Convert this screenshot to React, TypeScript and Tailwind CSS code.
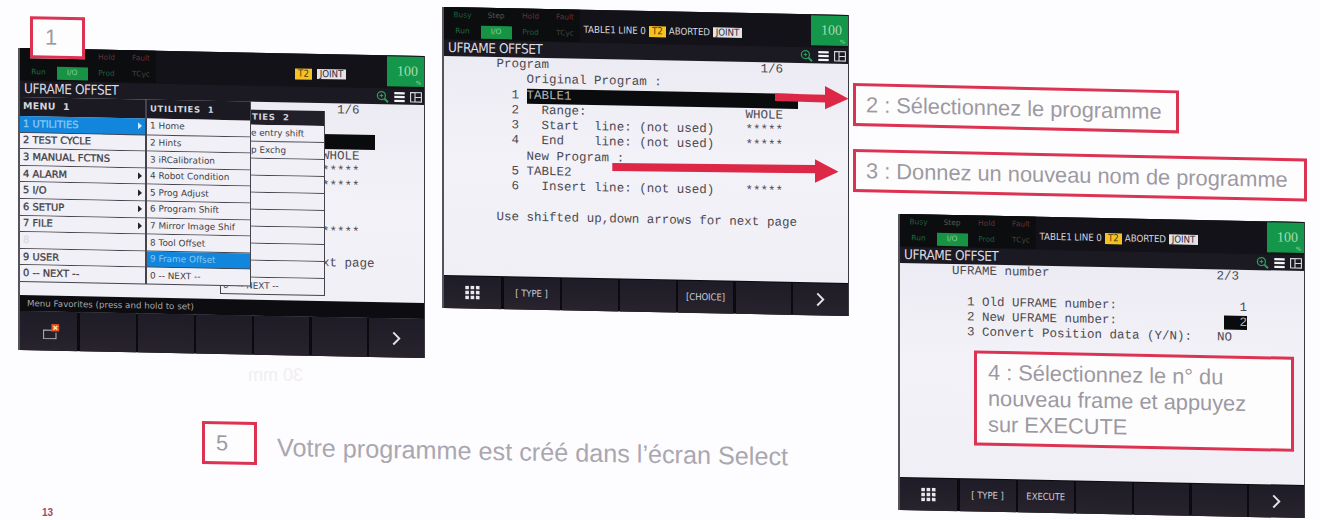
import type { ReactNode } from "react";

const UI = "font-['DejaVu_Sans_Condensed','DejaVu_Sans',sans-serif]";
const WIDE = "font-['DejaVu_Sans',sans-serif]";
const MONO = "font-['Liberation_Mono',monospace]";

function ZoomIcon() {
  return (
    <svg className="h-[13px] w-[13px] text-[#2b9c5c]" viewBox="0 0 13 13" fill="none" stroke="currentColor">
      <circle cx="5.4" cy="5.4" r="4" strokeWidth="1.3" />
      <path d="M8.5 8.5 L12 12" strokeWidth="2" />
      <path d="M5.4 3.6 V7.2 M3.6 5.4 H7.2" strokeWidth="1.1" />
    </svg>
  );
}

function BarsIcon() {
  return (
    <svg className="h-[11px] w-[11px]" viewBox="0 0 11 11" fill="#f4f3f6">
      <rect x="0.3" y="0.5" width="10.4" height="2.3" />
      <rect x="0.3" y="4.4" width="10.4" height="2.3" />
      <rect x="0.3" y="8.3" width="10.4" height="2.3" />
    </svg>
  );
}

function PanesIcon() {
  return (
    <svg className="h-[11px] w-[12px]" viewBox="0 0 12 11" fill="none" stroke="#dcdbe0" strokeWidth="1.1">
      <path d="M0.6 0.8 H11.4 V10.2 H0.6 Z M5 0.8 V10.2 M5 5.5 H11.4" />
    </svg>
  );
}

function KeypadIcon() {
  return (
    <svg className="h-[14px] w-[15px]" viewBox="0 0 15 14" fill="#e9e8ec">
      {[0, 5.3, 10.6].map((x) =>
        [0, 5, 10].map((y) => <rect key={`${x}-${y}`} x={x + 0.3} y={y + 0.2} width="3.6" height="3.5" />),
      )}
    </svg>
  );
}

function NextIcon() {
  return (
    <svg className="h-[14px] w-[9px]" viewBox="0 0 9 15" fill="none" stroke="#e4e3e8" strokeWidth="2">
      <path d="M1 1 L7.5 7.5 L1 14" />
    </svg>
  );
}

function FavoriteIcon() {
  return (
    <svg className="ml-[5px] h-[16px] w-[17px]" viewBox="0 0 17 16" fill="none">
      <path d="M9 6.5 H0.6 V15 H13 V9" stroke="#b8b6bd" strokeWidth="1" />
      <rect x="8.4" y="0.4" width="7.8" height="7.4" fill="#e2531f" />
      <path d="M10.4 2.2 L14.2 6 M14.2 2.2 L10.4 6" stroke="#fbe3a0" strokeWidth="1.5" />
    </svg>
  );
}

function Header({ program }: { program?: boolean }) {
  return (
    <div className={`flex h-[49px] flex-col bg-[#1b1922] ${UI}`}>
      <div className="flex h-[33px] bg-[#131218]">
        <div
          className={`grid h-[32px] w-[136px] grid-cols-[33px_34px_35px_34px] grid-rows-[15px_17px] items-center justify-items-center bg-[#0c0d0e] pl-[2px] text-[7.5px] leading-none ${WIDE}`}
        >
          <span className="text-[#1d5c40]">{program ? "Busy" : ""}</span>
          <span className="text-[#5b5648]">{program ? "Step" : ""}</span>
          <span className="text-[#64303a]">Hold</span>
          <span className="text-[#64303a]">Fault</span>
          <span className="pt-px text-[#1d6d45]">Run</span>
          <span className="mt-px flex h-[13px] w-[31px] items-center justify-center bg-[#169345] text-[#8fcf9f]">I/O</span>
          <span className="text-[#1d5c40]">Prod</span>
          <span className="text-[#45443f]">TCyc</span>
        </div>
        <div
          className={`flex flex-1 items-center justify-end pt-[7px] text-[9.7px] leading-none tracking-[-0.05px] text-[#d9d8de] ${program ? "gap-[3px] pr-[69px]" : "gap-[5px] pr-[41px]"}`}
        >
          {program && <span className="whitespace-nowrap">TABLE1 LINE 0</span>}
          <span className="flex h-[11px] w-[17px] items-center justify-center bg-[#f5c222] text-[#4c3d10]">T2</span>
          {program && <span>ABORTED</span>}
          <span className="flex h-[10px] w-[29px] items-center justify-center bg-[#e3e2e6] text-[#2d2b33]">JOINT</span>
        </div>
        <div className="relative mt-[1px] flex h-[30px] w-[37px] items-center justify-center bg-[#14974a] pl-1 font-['Liberation_Serif',serif] text-[14px] leading-none text-[#a9dcb4]">
          100
          <span className="absolute bottom-[1px] right-[3px] text-[6px] leading-none">%</span>
        </div>
      </div>
      <div className="flex h-[16px] items-center justify-between pl-[4px] pr-[2px]">
        <span className="whitespace-nowrap text-[13.5px] leading-none tracking-[-0.45px] text-[#dddce2]">UFRAME OFFSET</span>
        <div className="flex items-center gap-[5px]">
          <ZoomIcon />
          <BarsIcon />
          <PanesIcon />
        </div>
      </div>
    </div>
  );
}

function Row({ n, text, value, selected }: { n?: string; text?: string; value?: ReactNode; selected?: boolean }) {
  return (
    <div className="flex h-[15.25px] items-center whitespace-pre leading-[15.25px]">
      {n !== undefined && <span className="w-[30px] pl-[15px]">{n}</span>}
      <div
        className={
          selected
            ? "flex h-[15.25px] flex-1 justify-between bg-[#0a0b0c] text-[#b5b4b8]"
            : "flex flex-1 justify-between"
        }
      >
        <span>{text}</span>
        {value}
      </div>
    </div>
  );
}

const val = (s: string, pad = "pr-[15px]") => <span className={pad}>{s}</span>;

function ProgramPage() {
  return (
    <div className={`ml-[52.5px] w-[301.5px] text-[12.52px] text-[#4b4a50] ${MONO}`}>
      <Row text="Program" value={val("1/6")} />
      <Row n="" text="Original Program :" />
      <Row n="1" text="TABLE1" selected />
      <Row n="2" text="  Range:" value={val("WHOLE")} />
      <Row n="3" text="  Start  line: (not used)" value={val("*****")} />
      <Row n="4" text="  End    line: (not used)" value={val("*****")} />
      <Row n="" text="New Program :" />
      <Row n="5" text="TABLE2" />
      <Row n="6" text="  Insert line: (not used)" value={val("*****")} />
      <Row />
      <Row text="Use shifted up,down arrows for next page" />
    </div>
  );
}

/* Right-hand part of the program page that stays visible beside the open menus. */
function CoveredProgramPage() {
  return (
    <div className={`ml-[53px] w-[301.5px] text-[12.52px] text-[#4b4a50] ${MONO}`}>
      <Row value={val("1/6")} />
      <Row />
      <Row n="" selected />
      <Row value={val("WHOLE")} />
      <Row value={val("*****")} />
      <Row value={val("*****")} />
      <Row />
      <Row />
      <Row value={val("*****")} />
      <Row />
      <Row value={<span>xt page</span>} />
    </div>
  );
}

function FramePage() {
  return (
    <div className={`ml-[52px] w-[302px] text-[12.5px] text-[#4b4a50] ${MONO}`}>
      <Row text="UFRAME number" value={val("2/3")} />
      <Row />
      <Row n="1" text="Old UFRAME number:" value={val("1", "pr-[7px]")} />
      <Row
        n="2"
        text="New UFRAME number:"
        value={<span className="mr-[7px] h-[14px] bg-[#0a0b0c] pl-[15px] leading-[14px] text-[#b5b4b8]">2</span>}
      />
      <Row n="3" text="Convert Position data (Y/N):" value={val("NO", "pr-[22px]")} />
    </div>
  );
}

function Keys({ items, tall }: { items: ReactNode[]; tall?: boolean }) {
  return (
    <div
      className={`grid grid-cols-[57px_56px_55.5px_55.5px_55px_55px_1fr] gap-x-[2.5px] bg-[#0b0a0e] text-[9.5px] leading-none tracking-[-0.1px] text-[#cfced4] ${UI} ${tall ? "h-[39px]" : "h-[33px] pt-px"}`}
    >
      {items.map((item, i) => (
        <div key={i} className="flex items-center justify-center whitespace-nowrap bg-gradient-to-b from-[#1e1c27] to-[#28232d]">
          {item}
        </div>
      ))}
    </div>
  );
}

function Screen({ className, children }: { className: string; children: ReactNode }) {
  return (
    <section
      className={`relative flex w-[407px] shrink-0 origin-top-left skew-y-[1.13deg] flex-col border-l-2 border-r border-l-[#55535c] border-r-[#3b3941] bg-gradient-to-b from-[#e9e8f1] via-[#f3f2f8] to-[#efeef5] ${className}`}
    >
      {children}
    </section>
  );
}

interface Entry {
  label: string;
  sub?: boolean;
  active?: boolean;
  faded?: boolean;
}

const mainMenu: Entry[] = [
  { label: "1 UTILITIES", sub: true, active: true },
  { label: "2 TEST CYCLE" },
  { label: "3 MANUAL FCTNS" },
  { label: "4 ALARM", sub: true },
  { label: "5 I/O", sub: true },
  { label: "6 SETUP", sub: true },
  { label: "7 FILE", sub: true },
  { label: "8", faded: true },
  { label: "9 USER" },
  { label: "0 -- NEXT --" },
];

const utilities: Entry[] = [
  { label: "1 Home" },
  { label: "2 Hints" },
  { label: "3 iRCalibration" },
  { label: "4 Robot Condition" },
  { label: "5 Prog Adjust" },
  { label: "6 Program Shift" },
  { label: "7 Mirror Image Shif" },
  { label: "8 Tool Offset" },
  { label: "9 Frame Offset", active: true },
  { label: "0 -- NEXT --" },
];

const utilities2 = ["e entry shift", "p Exchg", "", "", "", "", "", "", "", ""];

function entryColors(entry: Entry) {
  if (entry.active) return "bg-[#1286dc] text-[#8cc8f2]";
  if (entry.faded) return "bg-[#f1f0f6] text-[#dcdbe4]";
  return "bg-[#f1f0f6] text-[#3f3d45]";
}

function MenuRow({ entry, className }: { entry: Entry; className: string }) {
  return (
    <div
      className={`flex items-center justify-between whitespace-pre border-b border-[#45434b] pr-[3px] leading-none ${className} ${entryColors(entry)}`}
    >
      <span>{entry.label}</span>
      {entry.sub && (
        <svg className="h-[7px] w-[4px]" viewBox="0 0 4 7" fill={entry.active ? "#d5ebfa" : "#26242b"}>
          <path d="M0 0 L4 3.5 L0 7 Z" />
        </svg>
      )}
    </div>
  );
}

function Menus() {
  return (
    <>
      <div className={`absolute left-[200px] top-[57px] w-[105px] border-x border-[#45434b] ${WIDE}`}>
        <div className="flex h-[15px] items-center whitespace-pre bg-[#211f29] pl-[31px] text-[8.5px] font-bold leading-none tracking-[0.7px] text-[#d6d5da]">
          TIES  2
        </div>
        {utilities2.map((label, i) => (
          <MenuRow
            key={i}
            entry={{ label: i === 9 ? "0   -- NEXT --" : label }}
            className={i === 9 ? "h-[17px] pl-[2px] text-[8.8px]" : "h-[17px] pl-[30px] text-[8.8px]"}
          />
        ))}
      </div>
      <div className={`absolute left-0 top-[49px] flex ${WIDE}`}>
        <div className="w-[127px] border-r-2 border-[#45434b]">
          <div className="flex h-[19px] items-center whitespace-pre bg-[#1b1922] pb-[2px] pl-[3px] text-[9.5px] font-bold leading-none tracking-[0.3px] text-[#d6d5da]">
            MENU  1
          </div>
          {mainMenu.map((e, i) => (
            <MenuRow key={i} entry={e} className="h-[16.6px] pl-[3px] text-[9.9px] [-webkit-text-stroke:0.3px_currentColor]" />
          ))}
        </div>
        <div className="w-[104px] border-r border-[#45434b]">
          <div className="flex h-[19px] items-center whitespace-pre bg-[#1b1922] pl-[3px] text-[8.5px] font-bold leading-none tracking-[0.6px] text-[#d6d5da]">
            UTILITIES  1
          </div>
          {utilities.map((e, i) => (
            <MenuRow key={i} entry={e} className="h-[16.6px] pl-[3px] text-[8.9px]" />
          ))}
        </div>
      </div>
    </>
  );
}

function Callout({ className, children }: { className: string; children: ReactNode }) {
  return (
    <div
      className={`flex shrink-0 origin-top-left items-center whitespace-nowrap border-[3.5px] border-[#dd3352] bg-[#fefdfe] font-['Liberation_Sans',sans-serif] text-[21.8px] leading-[26px] text-[#9c99a2] ${className}`}
    >
      {children}
    </div>
  );
}

export default function App() {
  return (
    <main className="relative flex h-[520px] w-[1320px] overflow-hidden bg-[#fdfcfe]">
      <div className="flex w-[853px] shrink-0 flex-col">
        <div className="flex h-[421px] items-start">
          <Screen className="ml-[18px] mt-[48px] h-[302px]">
            <Header />
            <div className="h-[198px]">
              <CoveredProgramPage />
            </div>
            <Menus />
            <div className={`flex h-[16px] items-center bg-[#0d0c10] pl-[7px] text-[8.7px] leading-none text-[#a5a4aa] ${WIDE}`}>
              Menu Favorites (press and hold to set)
            </div>
            <Keys tall items={[<FavoriteIcon />, "", "", "", "", "", <NextIcon />]} />
            <Callout className="absolute left-[10px] top-[-32px] h-[42px] w-[55px] pl-[12px]">1</Callout>
          </Screen>
          <Screen className="ml-[17px] mt-[6.5px] h-[301px]">
            <Header program />
            <div className="h-[219px]">
              <ProgramPage />
            </div>
            <Keys items={[<KeypadIcon />, "[ TYPE ]", "", "", "[CHOICE]", "", <NextIcon />]} />
          </Screen>
        </div>
        <div className="flex h-[80px] items-start">
          <Callout className="ml-[202px] h-[43px] w-[55px] skew-y-[1.1deg] pl-[11px]">5</Callout>
          <p className="ml-[20px] mt-[12px] origin-top-left skew-y-[1.05deg] whitespace-nowrap font-['Liberation_Sans',sans-serif] text-[25.2px] leading-[28px] text-[#aaa7b0]">
            Votre programme est créé dans l’écran Select
          </p>
        </div>
        <span className="ml-[42px] mt-[6px] font-['Liberation_Sans',sans-serif] text-[10px] font-bold leading-[12px] text-[#a04a68]">
          13
        </span>
      </div>

      <div className="flex w-[467px] shrink-0 flex-col pt-[83px]">
        <Callout className="h-[43px] w-[326px] skew-y-[1.3deg] pl-[10px]">2 : Sélectionnez le programme</Callout>
        <Callout className="mt-[23px] h-[43px] w-[454px] skew-y-[1.2deg] pl-[10px]">
          3 : Donnez un nouveau nom de programme
        </Callout>
        <Screen className="ml-[45px] mt-[22px] h-[296px]">
          <Header program />
          <div className="h-[214px]">
            <FramePage />
          </div>
          <Keys items={[<KeypadIcon />, "[ TYPE ]", "EXECUTE", "", "", "", <NextIcon />]} />
          <Callout className="absolute left-[74px] top-[135px] h-[95px] w-[320px] pl-[11px]">
            <span>
              4 : Sélectionnez le n° du
              <br />
              nouveau frame et appuyez
              <br />
              sur EXECUTE
            </span>
          </Callout>
        </Screen>
      </div>

      <svg className="absolute left-[610px] top-[80px] h-[110px] w-[240px]" viewBox="610 80 240 110" fill="#dd2746">
        <path d="M775 93.5 L825 94.8 V86 L848.5 98.7 L825 109.3 V102.6 L775 101 Z" />
        <path d="M612.3 163 L815 165 V159.3 L838.5 171.7 L815 182.7 V173.3 L612.3 171 Z" />
      </svg>

      <span className="absolute left-[248px] top-[364px] -scale-x-100 font-['Liberation_Sans',sans-serif] text-[18px] leading-[22px] text-[#f1eef3]">
        30 mm
      </span>
    </main>
  );
}
